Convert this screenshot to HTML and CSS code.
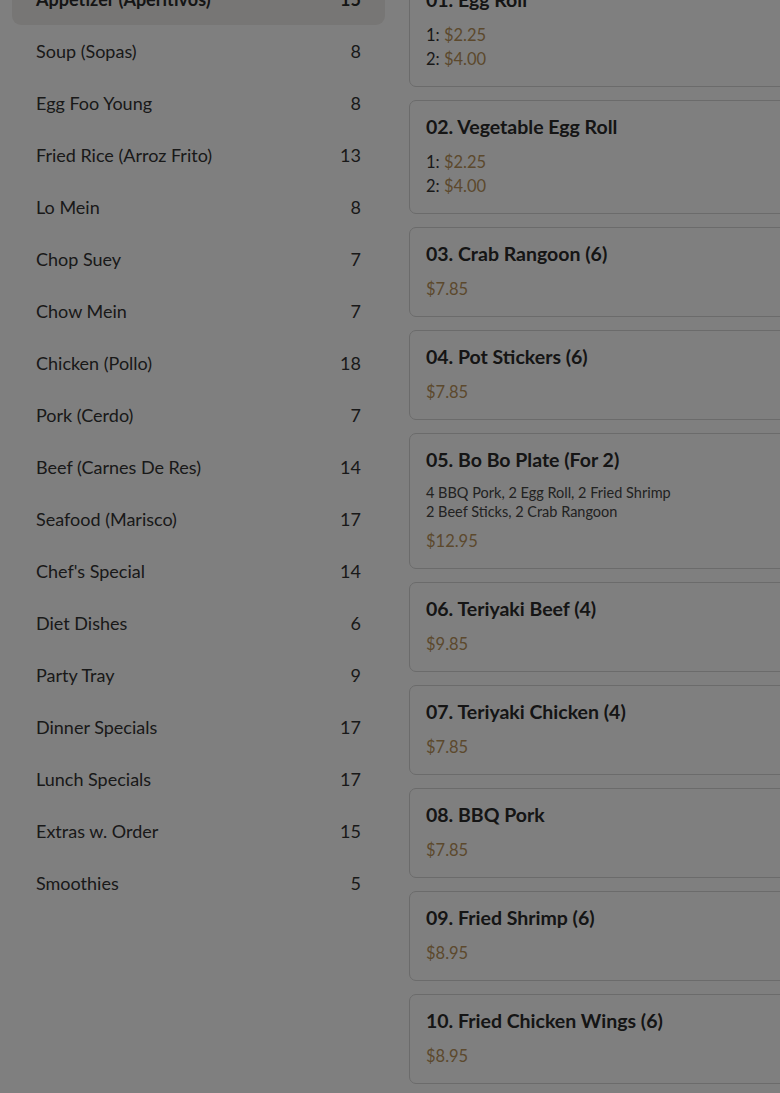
FILE: index.html
```html
<!DOCTYPE html>
<html lang="en">
<head>
<meta charset="utf-8">
<title>Menu</title>
<link rel="stylesheet" href="styles.css">
</head>
<body>
<div class="page">
  <nav class="cats">
    <a class="cat active"><span>Appetizer (Aperitivos)</span><span>15</span></a>
    <a class="cat"><span>Soup (Sopas)</span><span>8</span></a>
    <a class="cat"><span>Egg Foo Young</span><span>8</span></a>
    <a class="cat"><span>Fried Rice (Arroz Frito)</span><span>13</span></a>
    <a class="cat"><span>Lo Mein</span><span>8</span></a>
    <a class="cat"><span>Chop Suey</span><span>7</span></a>
    <a class="cat"><span>Chow Mein</span><span>7</span></a>
    <a class="cat"><span>Chicken (Pollo)</span><span>18</span></a>
    <a class="cat"><span>Pork (Cerdo)</span><span>7</span></a>
    <a class="cat"><span>Beef (Carnes De Res)</span><span>14</span></a>
    <a class="cat"><span>Seafood (Marisco)</span><span>17</span></a>
    <a class="cat"><span>Chef's Special</span><span>14</span></a>
    <a class="cat"><span>Diet Dishes</span><span>6</span></a>
    <a class="cat"><span>Party Tray</span><span>9</span></a>
    <a class="cat"><span>Dinner Specials</span><span>17</span></a>
    <a class="cat"><span>Lunch Specials</span><span>17</span></a>
    <a class="cat"><span>Extras w. Order</span><span>15</span></a>
    <a class="cat"><span>Smoothies</span><span>5</span></a>
  </nav>
  <main class="items">
    <div class="card">
      <h3 class="title">01. Egg Roll</h3>
      <div class="prices"><div>1: <span class="price">$2.25</span></div><div>2: <span class="price">$4.00</span></div></div>
    </div>
    <div class="card">
      <h3 class="title">02. Vegetable Egg Roll</h3>
      <div class="prices"><div>1: <span class="price">$2.25</span></div><div>2: <span class="price">$4.00</span></div></div>
    </div>
    <div class="card">
      <h3 class="title">03. Crab Rangoon (6)</h3>
      <div class="prices"><span class="price">$7.85</span></div>
    </div>
    <div class="card">
      <h3 class="title">04. Pot Stickers (6)</h3>
      <div class="prices"><span class="price">$7.85</span></div>
    </div>
    <div class="card">
      <h3 class="title">05. Bo Bo Plate (For 2)</h3>
      <p class="desc">4 BBQ Pork, 2 Egg Roll, 2 Fried Shrimp<br>2 Beef Sticks, 2 Crab Rangoon</p>
      <div class="prices after-desc"><span class="price">$12.95</span></div>
    </div>
    <div class="card">
      <h3 class="title">06. Teriyaki Beef (4)</h3>
      <div class="prices"><span class="price">$9.85</span></div>
    </div>
    <div class="card">
      <h3 class="title">07. Teriyaki Chicken (4)</h3>
      <div class="prices"><span class="price">$7.85</span></div>
    </div>
    <div class="card">
      <h3 class="title">08. BBQ Pork</h3>
      <div class="prices"><span class="price">$7.85</span></div>
    </div>
    <div class="card">
      <h3 class="title">09. Fried Shrimp (6)</h3>
      <div class="prices"><span class="price">$8.95</span></div>
    </div>
    <div class="card">
      <h3 class="title">10. Fried Chicken Wings (6)</h3>
      <div class="prices"><span class="price">$8.95</span></div>
    </div>
    <div class="card">
      <h3 class="title">11. Beef Sticks (4)</h3>
      <div class="prices"><span class="price">$8.95</span></div>
    </div>
  </main>
</div>
<div class="backdrop"></div>
</body>
</html>
```

FILE: styles.css
```css
html, body {
  margin: 0;
  padding: 0;
  background: #ffffff;
  overflow: hidden;
  height: 1093px;
}
body {
  font-family: "Lato", "Noto Sans", sans-serif;
  color: #2e2e2e;
}
.page {
  display: grid;
  grid-template-columns: 373px 440px;
  column-gap: 24px;
  align-items: start;
  padding: 0 12px;
  margin-top: -27px;
  width: 900px;
}
.cats {
  display: flex;
  flex-direction: column;
}
.cat {
  display: flex;
  justify-content: space-between;
  align-items: center;
  height: 52px;
  padding: 0 24px;
  border-radius: 9px;
  font-size: 18px;
  color: #333333;
}
.cat.active {
  background: #efedea;
  font-weight: 700;
  color: #2a2a2a;
}
.items {
  display: flex;
  flex-direction: column;
  gap: 13px;
}
.card {
  border: 1px solid #d6d6d6;
  border-radius: 7px;
  padding: 15px 16px;
  background: #ffffff;
}
.title {
  margin: 0;
  font-size: 19.5px;
  line-height: 22px;
  font-weight: 700;
  color: #2a2a2a;
}
.prices {
  margin-top: 12px;
  font-size: 16.5px;
  line-height: 24px;
  color: #333333;
}
.prices.after-desc {
  margin-top: 8px;
}
.price {
  color: #b8925a;
}
.desc {
  margin: 12px 0 0;
  font-size: 14.5px;
  line-height: 19px;
  color: #444444;
}
.backdrop {
  position: fixed;
  inset: 0;
  background: rgba(0, 0, 0, 0.5);
}
```
